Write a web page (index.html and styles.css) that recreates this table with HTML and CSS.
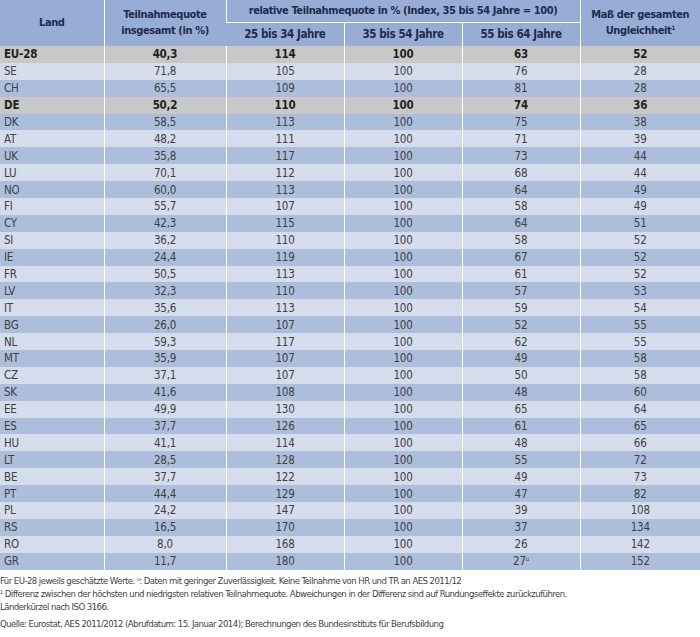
FILE: index.html
```html
<!DOCTYPE html>
<html lang="de">
<head>
<meta charset="utf-8">
<title>Teilnahmequote</title>
<link rel="stylesheet" href="styles.css">
</head>
<body>
<table class="tbl">
  <colgroup>
    <col class="c-land"><col class="c-q"><col class="c-a"><col class="c-a"><col class="c-a"><col class="c-m">
  </colgroup>
  <thead>
    <tr class="h1">
      <th rowspan="2">Land</th>
      <th rowspan="2">Teilnahmequote<br>insgesamt (in %)</th>
      <th colspan="3" class="group">relative Teilnahmequote in % (Index, 35 bis 54 Jahre = 100)</th>
      <th rowspan="2" class="top">Maß der gesamten<br>Ungleichheit<sup>1</sup></th>
    </tr>
    <tr class="h2">
      <th>25 bis 34 Jahre</th>
      <th>35 bis 54 Jahre</th>
      <th>55 bis 64 Jahre</th>
    </tr>
  </thead>
  <tbody>
    <tr class="hl"><td>EU-28</td><td>40,3</td><td>114</td><td>100</td><td>63</td><td>52</td></tr>
    <tr class="lt"><td>SE</td><td>71,8</td><td>105</td><td>100</td><td>76</td><td>28</td></tr>
    <tr class="md"><td>CH</td><td>65,5</td><td>109</td><td>100</td><td>81</td><td>28</td></tr>
    <tr class="hl"><td>DE</td><td>50,2</td><td>110</td><td>100</td><td>74</td><td>36</td></tr>
    <tr class="md"><td>DK</td><td>58,5</td><td>113</td><td>100</td><td>75</td><td>38</td></tr>
    <tr class="lt"><td>AT</td><td>48,2</td><td>111</td><td>100</td><td>71</td><td>39</td></tr>
    <tr class="md"><td>UK</td><td>35,8</td><td>117</td><td>100</td><td>73</td><td>44</td></tr>
    <tr class="lt"><td>LU</td><td>70,1</td><td>112</td><td>100</td><td>68</td><td>44</td></tr>
    <tr class="md"><td>NO</td><td>60,0</td><td>113</td><td>100</td><td>64</td><td>49</td></tr>
    <tr class="lt"><td>FI</td><td>55,7</td><td>107</td><td>100</td><td>58</td><td>49</td></tr>
    <tr class="md"><td>CY</td><td>42,3</td><td>115</td><td>100</td><td>64</td><td>51</td></tr>
    <tr class="lt"><td>SI</td><td>36,2</td><td>110</td><td>100</td><td>58</td><td>52</td></tr>
    <tr class="md"><td>IE</td><td>24,4</td><td>119</td><td>100</td><td>67</td><td>52</td></tr>
    <tr class="lt"><td>FR</td><td>50,5</td><td>113</td><td>100</td><td>61</td><td>52</td></tr>
    <tr class="md"><td>LV</td><td>32,3</td><td>110</td><td>100</td><td>57</td><td>53</td></tr>
    <tr class="lt"><td>IT</td><td>35,6</td><td>113</td><td>100</td><td>59</td><td>54</td></tr>
    <tr class="md"><td>BG</td><td>26,0</td><td>107</td><td>100</td><td>52</td><td>55</td></tr>
    <tr class="lt"><td>NL</td><td>59,3</td><td>117</td><td>100</td><td>62</td><td>55</td></tr>
    <tr class="md"><td>MT</td><td>35,9</td><td>107</td><td>100</td><td>49</td><td>58</td></tr>
    <tr class="lt"><td>CZ</td><td>37,1</td><td>107</td><td>100</td><td>50</td><td>58</td></tr>
    <tr class="md"><td>SK</td><td>41,6</td><td>108</td><td>100</td><td>48</td><td>60</td></tr>
    <tr class="lt"><td>EE</td><td>49,9</td><td>130</td><td>100</td><td>65</td><td>64</td></tr>
    <tr class="md"><td>ES</td><td>37,7</td><td>126</td><td>100</td><td>61</td><td>65</td></tr>
    <tr class="lt"><td>HU</td><td>41,1</td><td>114</td><td>100</td><td>48</td><td>66</td></tr>
    <tr class="md"><td>LT</td><td>28,5</td><td>128</td><td>100</td><td>55</td><td>72</td></tr>
    <tr class="lt"><td>BE</td><td>37,7</td><td>122</td><td>100</td><td>49</td><td>73</td></tr>
    <tr class="md"><td>PT</td><td>44,4</td><td>129</td><td>100</td><td>47</td><td>82</td></tr>
    <tr class="lt"><td>PL</td><td>24,2</td><td>147</td><td>100</td><td>39</td><td>108</td></tr>
    <tr class="md"><td>RS</td><td>16,5</td><td>170</td><td>100</td><td>37</td><td>134</td></tr>
    <tr class="lt"><td>RO</td><td>8,0</td><td>168</td><td>100</td><td>26</td><td>142</td></tr>
    <tr class="md"><td>GR</td><td>11,7</td><td>180</td><td>100</td><td>27<sup>u</sup></td><td>152</td></tr>
  </tbody>
</table>
<div class="notes">
  <p>Für EU-28 jeweils geschätzte Werte. <sup>u</sup>: Daten mit geringer Zuverlässigkeit. Keine Teilnahme von HR und TR an AES 2011/12</p>
  <p><sup>1</sup> Differenz zwischen der höchsten und niedrigsten relativen Teilnahmequote. Abweichungen in der Differenz sind auf Rundungseffekte zurückzuführen.</p>
  <p>Länderkürzel nach ISO 3166.</p>
  <p class="source">Quelle: Eurostat, AES 2011/2012 (Abrufdatum: 15. Januar 2014); Berechnungen des Bundesinstituts für Berufsbildung</p>
</div>
</body>
</html>
```
FILE: styles.css
```css
html, body {
  margin: 0;
  padding: 0;
  background: #ffffff;
}
body {
  width: 700px;
  font-family: "DejaVu Sans Condensed", "Liberation Sans", sans-serif;
  color: #404040;
}
.tbl {
  width: 700px;
  border-collapse: collapse;
  table-layout: fixed;
  font-size: 11.5px;
  letter-spacing: -0.2px;
}
.c-land { width: 104px; }
.c-q { width: 122px; }
.c-a { width: 118px; }
.c-m { width: 120px; }

.tbl th {
  background: #97add5;
  color: #1d2b4a;
  font-weight: bold;
  font-size: 11px;
  letter-spacing: -0.4px;
  text-align: center;
  vertical-align: middle;
  line-height: 16px;
  border-left: 1px solid #ffffff;
  padding: 0;
  white-space: nowrap;
}
.tbl th:first-child { border-left: none; }
.h1 { height: 22px; }
.h2 { height: 24px; }
.h2 th { border-top: 1px solid #ffffff; border-left: 1px solid #ffffff; font-size: 11.5px; }
.tbl th sup { font-size: 6px; vertical-align: 4px; line-height: 0; }

.tbl td {
  height: 16.9px;
  padding: 0;
  text-align: center;
  border-left: 1px solid #ffffff;
  line-height: 16px;
}
.tbl td:first-child {
  text-align: left;
  padding-left: 4px;
  border-left: none;
}
.tbl td sup { font-size: 6px; vertical-align: 4px; line-height: 0; }

.hl td { background: #c8c8c8; font-weight: bold; color: #1f1f1f; }
.lt td { background: #d5dcec; }
.md td { background: #acbedc; }

.notes {
  padding-top: 4px;
  font-size: 9.5px;
  letter-spacing: -0.55px;
  color: #444444;
}
.notes p {
  margin: 0;
  line-height: 13px;
  white-space: nowrap;
}
.notes sup { font-size: 5.5px; vertical-align: 3px; line-height: 0; }
.notes .source { margin-top: 4px; }
```
